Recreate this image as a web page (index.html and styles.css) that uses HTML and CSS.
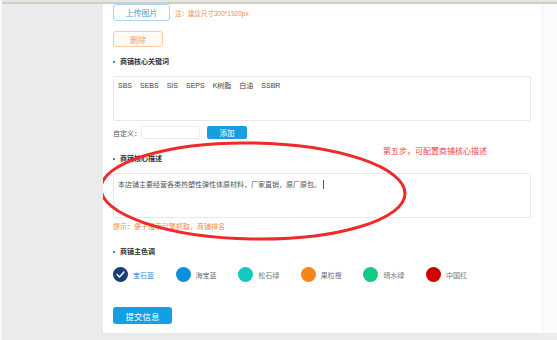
FILE: index.html
```html
<!DOCTYPE html>
<html lang="zh-CN">
<head>
  <meta charset="UTF-8"/>
  <title>商铺设置</title>
  <link rel="stylesheet" href="styles.css">
</head>
<body>

<div class="topbar"></div>

<div class="layout">
  <aside class="side"></aside>

  <main class="panel">
    <div class="upload-row">
      <button class="btn btn-upload">上传图片</button>
      <span class="note">注：建议尺寸300*1920px</span>
    </div>

    <button class="btn btn-del">删除</button>

    <h3 class="title">商铺核心关键词</h3>
    <div class="box keywords">
      <span>SBS</span>
      <span>SEBS</span>
      <span>SIS</span>
      <span>SEPS</span>
      <span>K树脂</span>
      <span>白油</span>
      <span>SSBR</span>
    </div>

    <div class="custom-row">
      <label>自定义：</label>
      <input class="custom-input" type="text">
      <button class="btn btn-add">添加</button>
    </div>

    <h3 class="title">商铺核心描述</h3>
    <div class="box desc">本店铺主要经营各类热塑性弹性体原材料，厂家直销，原厂原包。<span class="caret"></span></div>
    <p class="hint">提示：便于搜索引擎抓取，商铺排名</p>

    <h3 class="title">商铺主色调</h3>
    <div class="colors">
      <div class="color-item active">
        <span class="swatch c-gem">
          <svg width="15" height="15" viewBox="0 0 15 15"><path d="M4 7.6 L6.5 10 L11 5" fill="none" stroke="#fff" stroke-width="1.4" stroke-linecap="round" stroke-linejoin="round"/></svg>
        </span>
        <span>宝石蓝</span>
      </div>
      <div class="color-item"><span class="swatch c-sea"></span><span>海宝蓝</span></div>
      <div class="color-item"><span class="swatch c-turq"></span><span>松石绿</span></div>
      <div class="color-item"><span class="swatch c-orange"></span><span>果粒橙</span></div>
      <div class="color-item"><span class="swatch c-green"></span><span>晴水绿</span></div>
      <div class="color-item"><span class="swatch c-red"></span><span>中国红</span></div>
    </div>

    <button class="btn btn-submit">提交信息</button>

    <!-- annotation on top of the form -->
    <div class="step-tip">第五步，可配置商铺核心描述</div>
    <svg class="mark" width="439" height="329" viewBox="0 0 439 329">
      <ellipse cx="150" cy="187" rx="152" ry="48" transform="rotate(1 150 187)" fill="none" stroke="#ee2a2a" stroke-width="3"/>
    </svg>
  </main>

  <div class="scrollbar"></div>
</div>

</body>
</html>
```

FILE: styles.css
```css
body {
  margin: 0;
  background-color: #ebebeb;
  font-family: "Liberation Sans", "Noto Sans CJK SC", sans-serif;
  font-size: 7px;
  color: #555;
  border-left: 2px solid #f8f8f8;
  height: 340px;
  box-sizing: border-box;
  overflow: hidden;
}

.topbar {
  height: 2px;
  background-color: #cfcfc7;
  border-top: 2px solid #e6e6e0;
}

.layout {
  display: flex;
  height: 329px;
}

.side {
  width: 101px;
  background-color: #ebebeb;
}

.panel {
  position: relative;
  width: 429px;
  padding-left: 10px;
  background-color: #fff;
  overflow: hidden;
}

.scrollbar {
  width: 15px;
  background-color: #fbfbfb;
  border-left: 1px solid #f2f2f2;
  box-sizing: border-box;
}

.btn {
  display: block;
  font: inherit;
  padding: 0;
  cursor: pointer;
  border-radius: 3px;
}

.upload-row {
  display: flex;
  align-items: center;
  gap: 5px;
}

.btn-upload {
  width: 57px;
  height: 17px;
  font-size: 8px;
  color: #3c9de0;
  background-color: #fff;
  border: 1px solid #a9d5f2;
}

.note {
  color: #f5884a;
  font-size: 6.5px;
}

.btn-del {
  margin-top: 10px;
  width: 50px;
  height: 16px;
  font-size: 8px;
  color: #f29a6a;
  background-color: #fffaf5;
  border: 1px solid #f8cb9e;
}

.title {
  margin: 9px 0 0;
  height: 12px;
  line-height: 12px;
  font-size: 7px;
  font-weight: bold;
  color: #333;
  display: flex;
  align-items: center;
}

.title::before {
  content: "";
  width: 2px;
  height: 2px;
  background-color: #1a9ee0;
  margin-right: 5px;
}

.box {
  width: 418px;
  height: 45px;
  margin-top: 8px;
  border: 1px solid #e8e8e8;
  border-radius: 2px;
  box-sizing: border-box;
  padding: 3px 4px;
  line-height: 12px;
}

.keywords {
  display: flex;
  align-items: flex-start;
  gap: 8px;
  color: #444;
  font-size: 7px;
}

.custom-row {
  display: flex;
  align-items: center;
  margin-top: 5px;
  height: 13px;
}

.custom-row label {
  width: 28px;
}

.custom-input {
  width: 59px;
  height: 13px;
  border: 1px solid #ececec;
  border-radius: 2px;
  box-sizing: border-box;
  padding: 0;
}

.btn-add {
  margin-left: 7px;
  width: 40px;
  height: 13px;
  font-size: 7.5px;
  color: #fff;
  background-color: #1a9de0;
  border: none;
  border-radius: 2px;
}

.custom-row + .title {
  margin-top: 14px;
}

.desc {
  color: #555;
  padding-top: 5px;
}

.caret {
  display: inline-block;
  width: 0;
  height: 9px;
  margin-left: 2px;
  border-left: 1px solid #555;
  vertical-align: -2px;
}

.hint {
  margin: 3px 0 0;
  line-height: 12px;
  color: #f5883c;
}

.hint + .title {
  margin-top: 13px;
}

.colors {
  display: flex;
  margin-top: 9px;
}

.color-item {
  width: 62.6px;
  display: flex;
  align-items: center;
  gap: 5px;
  color: #777;
}

.color-item.active {
  color: #3a8fd8;
}

.swatch {
  width: 15px;
  height: 15px;
  border-radius: 50%;
  display: block;
}

.swatch svg {
  display: block;
}

.c-gem { background-color: #163e7b; }
.c-sea { background-color: #0d8fdb; }
.c-turq { background-color: #13c9bf; }
.c-orange { background-color: #f2861a; }
.c-green { background-color: #13c983; }
.c-red { background-color: #d00000; }

.btn-submit {
  margin-top: 25px;
  width: 59px;
  height: 17px;
  font-size: 8.5px;
  color: #fff;
  background-color: #11a0e4;
  border: none;
}

.step-tip {
  position: absolute;
  left: 280px;
  top: 142px;
  font-size: 8px;
  line-height: 12px;
  color: #ee4545;
}

.mark {
  position: absolute;
  left: 0;
  top: 0;
  pointer-events: none;
}
```
